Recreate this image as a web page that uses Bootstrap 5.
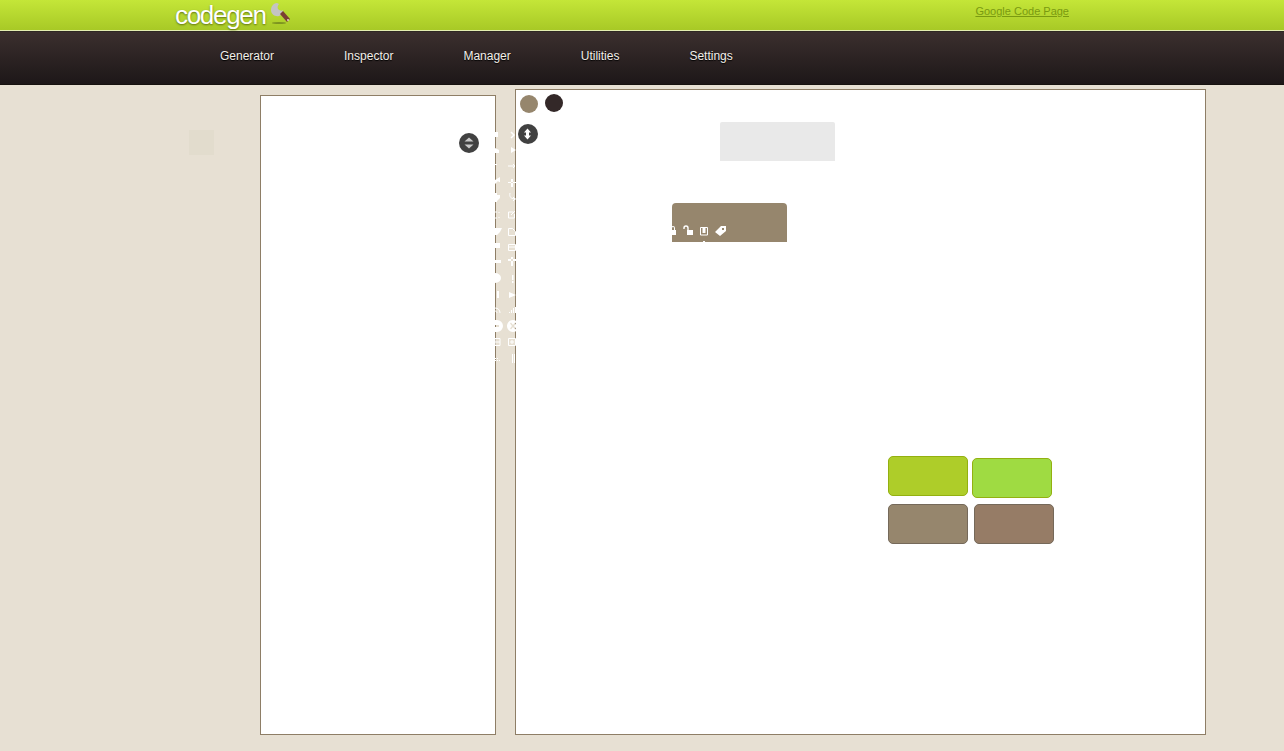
<!DOCTYPE html>
<html lang="en"><head><meta charset="utf-8"><title>codegen</title>
<link rel="stylesheet" href="https://cdn.jsdelivr.net/npm/bootstrap@5.3.0/dist/css/bootstrap.min.css">
<style>
html,body{height:751px;overflow:hidden}
body{background:#e7e0d3;font-family:"Liberation Sans",Arial,sans-serif;position:relative}
.topbar{height:30px;background:linear-gradient(#c4e638,#a8c926);padding-left:175px;padding-right:215px}
.logo-word{font-size:26px;line-height:30px;color:#fff;letter-spacing:-1.3px;text-shadow:0 1px 2px #5d7010}
.logo-mark{margin-left:4px;margin-top:2px}
.code-link{font-size:11px;color:#7a9a10;line-height:22px;text-decoration:underline}
.rule{height:2px;background:linear-gradient(#e3eeb0 50%,#2f2723 50%)}
.mainnav{height:53px;background:linear-gradient(#3b2f2e,#1d1718);border-bottom:1px solid #17120f;padding-left:220px;padding-bottom:4px;gap:70px}
.mainnav a{font-size:12px;color:#f2efe9;text-decoration:none;text-shadow:0 1px 1px #000}
.stage{height:666px;padding-left:260px;padding-top:4px}
.leftpane{width:236px;height:640px;margin-top:6px;margin-right:19px;background:#fff;border:1px solid #8e7e66;flex:none}
.rightpane{width:691px;height:646px;background:#fff;border:1px solid #8e7e66;flex:none}
.free{position:absolute}
.ghost{left:189px;top:130px;width:25px;height:25px;background:#e2dccd}
.dot{border-radius:50%;width:18px;height:18px}
.dot-tan{left:520px;top:95px;background:#96866d}
.dot-dark{left:545px;top:94px;background:#332828}
.spin{width:20px;height:20px;border-radius:50%;background:#414141}
.spin-a{left:459px;top:133px}
.spin-b{left:518px;top:124px}
.greybox{left:720px;top:122px;width:115px;height:39px;background:#e9e9e9;border-radius:2px 2px 0 0}
.tanbox{left:672px;top:203px;width:115px;height:39px;background:#96866d;border-radius:4px 4px 0 0;overflow:hidden}
.strip{left:495px;top:125px}
.swatch{width:80px;height:40px;border-radius:5px;border:1px solid}
.sw1{left:888px;top:456px;background:#aecd29;border-color:#93b010}
.sw2{left:972px;top:458px;background:#9fdb42;border-color:#93b010}
.sw3{left:888px;top:504px;background:#96866d;border-color:#75695a}
.sw4{left:974px;top:504px;background:#967c66;border-color:#75695a}
</style></head>
<body>
<header class="topbar d-flex justify-content-between">
  <div class="d-flex align-items-start">
    <span class="logo-word">codegen</span>
    <svg class="logo-mark" width="22" height="24" viewBox="0 0 22 24"><ellipse cx="9" cy="21" rx="7" ry="1" fill="#7d9420"/><path d="M7 1C3 1 1 5 1 8c0 4 4 7 8 6l4-2V8c-1 1-3 1-5-1-1-2 0-4 1-5z" fill="#c4c4c2"/><path d="M13 9l7 8-3 3-7-8z" fill="#7a3f33"/><circle cx="18" cy="18" r="1" fill="#e4d6c6"/></svg>
  </div>
  <a class="code-link" href="#">Google Code Page</a>
</header>
<div class="rule"></div>
<nav class="mainnav d-flex align-items-center">
  <a href="#">Generator</a><a href="#">Inspector</a><a href="#">Manager</a><a href="#">Utilities</a><a href="#">Settings</a>
</nav>
<main class="stage d-flex">
  <div class="leftpane"></div>
  <div class="rightpane"></div>
</main>
<div class="free ghost"></div>
<div class="free dot dot-tan"></div>
<div class="free dot dot-dark"></div>
<div class="free spin spin-a"><svg class="d-block" width="20" height="20"><path d="M10 4.500l4.500 4h-9zM10 15.500l4.500-4h-9z" fill="#c9c9c9"/></svg></div>
<div class="free spin spin-b"><svg class="d-block" width="20" height="20"><path d="M9.500 4.500l3.500 4h-2v1.500H8v-1.500H6zM9.500 15.500l3.500-4h-2V10H8v1.500H6z" fill="#fff"/></svg></div>
<div class="free greybox"></div>
<div class="free tanbox"><svg class="d-block" width="115" height="39" viewBox="672 203 115 39"><path fill="#fff" fill-rule="evenodd" d="M670 230h6v5h-6zM672 230v-2a1 1 0 0 1 2 0v2h1v-2a2 2 0 0 0-4 0v2z"/><path fill="none" stroke="#fff" stroke-width="1.400" d="M684 229v-1a2 2 0 0 1 4 0v2"/><path fill="#fff" d="M687 230h6v5h-6z"/><path fill="none" stroke="#fff" d="M700.500 227.500h7v7.500h-7z"/><path fill="#fff" d="M702.500 228h3v5h-3z"/><path fill="#fff" fill-rule="evenodd" d="M715 232l6-6h5v5l-6 5zM722 228h2v2h-2z"/><rect x="703" y="241" width="2" height="1" fill="#fff"/></svg></div>
<svg class="free strip" width="21" height="245" viewBox="495 125 21 245">
<g fill="#fff">
<path d="M495 132h3v5h-3zM495 148l4 2v3h-4zM495 164h2v1h-2v3h-1z"/>
<path d="M495 243h5v5h-5zM495 228h7l-2 4-3 3h-2zM495 260h6v3h-6z"/>
<path d="M495 273a6 5 0 0 1 0 10zM497 291h2v7h-2z"/>
<path d="M495 180l5-3v5h-1l-1-1-3 3zM495 193h2v2h3v3l-3 3v1h-2z"/>
<path fill-rule="evenodd" d="M495 320h2a6 6 0 0 1 0 12h-2zM495 325v2h4v-2z"/>
<path fill-rule="evenodd" d="M513 320a6 6 0 1 1-.010 0zM510 323.500l2 2.500-2 2.500 1 1 2-2.500 2 2.500 1-1-2-2.500 2-2.500-1-1-2 2.500-2-2.500z"/>
<path d="M511 147l5 3-5 3zM508 183h8v-1h-8zM511 179h2v8h-2zM508 261h8v-2h-8zM511 257h2v9h-2z"/>
<path d="M512 275h1.500v5H512zM512 281h1.500v2H512zM509 292l7 3-7 3zM509 312h1v1h-1zM511 310h1v3h-1zM513 308h1v5h-1zM515 307h1v6h-1zM512 354h1v9h-1zM514 354h1v9h-1z"/>
<path d="M495 360h1v1h-1zM497 360h1v1h-1zM499 360h1v1h-1zM495 358h1v1h-1zM497 358h1v1h-1z"/>
</g>
<g fill="none" stroke="#fff">
<path d="M511 132l3 3-3 3" stroke-width="1.500"/>
<path d="M508 166h7M513 164l2 2-2 2"/>
<path d="M510 193c-1 4 1 6 6 6M513 197l2 2-2 2"/>
<path d="M513.500 212h-5v6h6v-4M511 215l4-4"/>
<path d="M508.500 228.500h4l3 3v4h-7z"/>
<path d="M508.500 244.500h7v6h-7zM508.500 247h7"/>
<path d="M495 212h2M495 218h2M499 212v1M499 217v1"/>
<path d="M495 308c3 0 5 2 5 5M495 311c1 0 2 1 2 2" />
<path d="M495 338.500h5v7h-5zM495 342h5"/>
<path d="M508.500 338.500h7v7h-7zM511 341h2v2h-2z"/>
</g>
</svg>
<div class="free swatch sw1"></div><div class="free swatch sw2"></div><div class="free swatch sw3"></div><div class="free swatch sw4"></div>
<script src="https://cdn.jsdelivr.net/npm/bootstrap@5.3.0/dist/js/bootstrap.bundle.min.js"></script>
</body></html>
